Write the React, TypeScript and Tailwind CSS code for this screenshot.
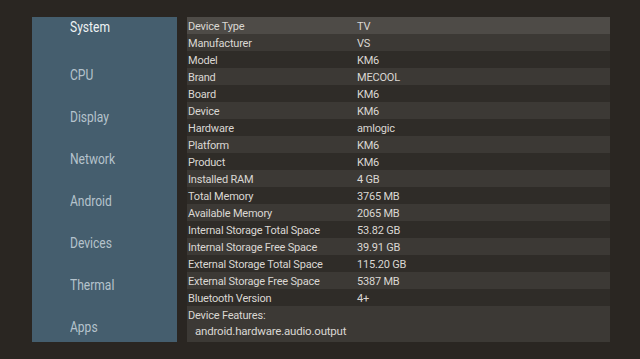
import React from "react";

const menu = ["CPU", "Display", "Network", "Android", "Devices", "Thermal", "Apps"];

const rows: [string, string][] = [
  ["Device Type", "TV"],
  ["Manufacturer", "VS"],
  ["Model", "KM6"],
  ["Brand", "MECOOL"],
  ["Board", "KM6"],
  ["Device", "KM6"],
  ["Hardware", "amlogic"],
  ["Platform", "KM6"],
  ["Product", "KM6"],
  ["Installed RAM", "4 GB"],
  ["Total Memory", "3765 MB"],
  ["Available Memory", "2065 MB"],
  ["Internal Storage Total Space", "53.82 GB"],
  ["Internal Storage Free Space", "39.91 GB"],
  ["External Storage Total Space", "115.20 GB"],
  ["External Storage Free Space", "5387 MB"],
  ["Bluetooth Version", "4+"],
];

const features = ["android.hardware.audio.output", "android.hardware.bluetooth"];

function rowBg(i: number) {
  if (i === 0) return "bg-[#4e4b47]";
  return i % 2 === 1 ? "bg-[#3c3935]" : "bg-[#2f2c28]";
}

export default function App() {
  return (
    <div
      className="w-[640px] h-[359px] bg-[#2a2622] flex items-start gap-[10px] pl-[32px] pt-[17px] overflow-hidden"
      style={{ fontFamily: "Roboto, 'Noto Sans', sans-serif" }}
    >
      {/* Category sidebar */}
      <div className="w-[145px] h-[325px] bg-[#455e6e] flex flex-col pl-[38px] shrink-0">
        <div className="h-[20px] flex items-center">
          <span className="inline-block text-[14px] text-[#eef2f4] scale-x-[0.86] origin-left">System</span>
        </div>
        <div className="mt-[17px] flex flex-col">
          {menu.map((m) => (
            <div key={m} className="h-[42px] flex items-center">
              <span className="inline-block text-[14px] text-[#b5c3cc] scale-x-[0.86] origin-left">{m}</span>
            </div>
          ))}
        </div>
      </div>

      {/* Info table */}
      <div className="w-[423px] flex flex-col text-[11px] tracking-[-0.2px] text-[#dad7d3]">
        {rows.map(([k, v], i) => (
          <div key={k} className={`h-[17px] flex items-center pt-[3px] leading-[14px] ${rowBg(i)}`}>
            <div className="w-[170px] pl-[1px] whitespace-nowrap">{k}</div>
            <div className="whitespace-nowrap">{v}</div>
          </div>
        ))}
        <div className="h-[36px] overflow-hidden bg-[#3c3935] pl-[1px] pt-[2px]">
          <div className="h-[15px] flex items-center pt-[1px]">Device Features:</div>
          {features.map((f) => (
            <div key={f} className="h-[15px] flex items-center pl-[7px] pt-[2px] text-[11.5px]">
              {f}
            </div>
          ))}
        </div>
      </div>
    </div>
  );
}
